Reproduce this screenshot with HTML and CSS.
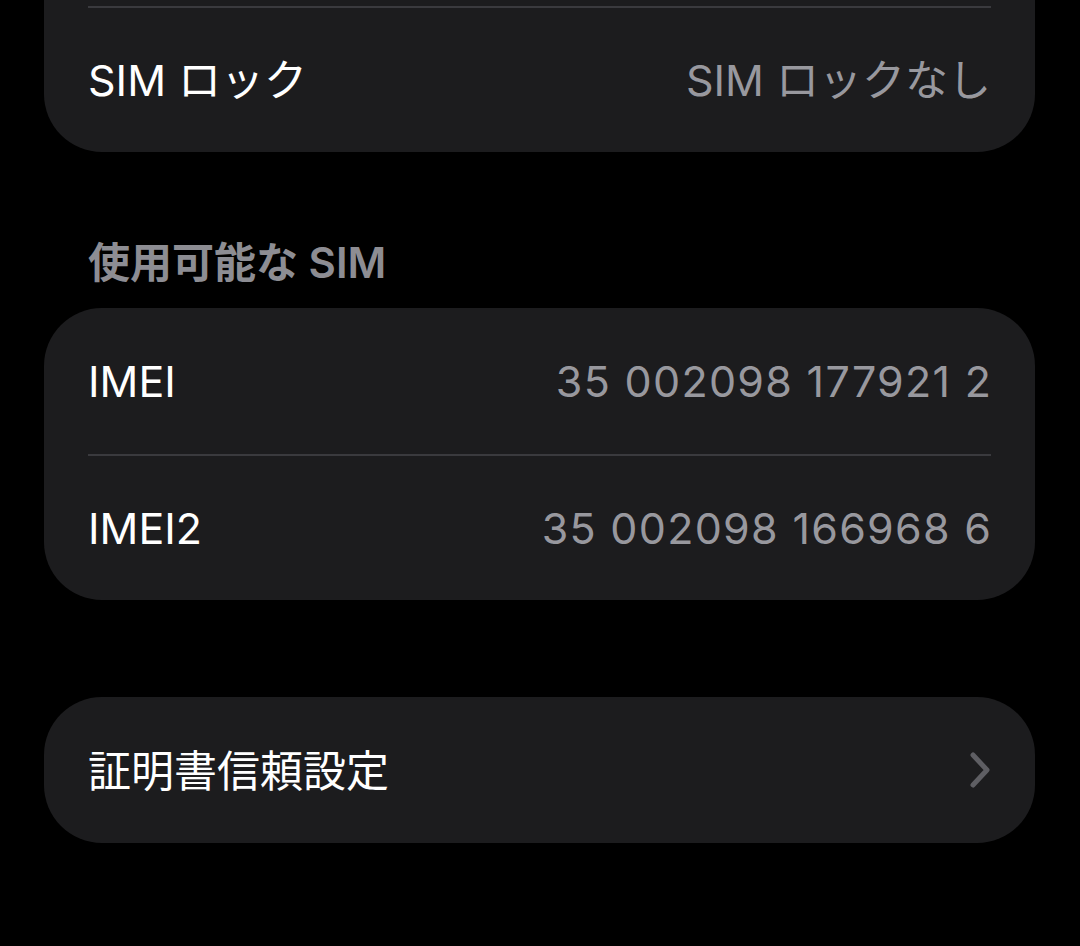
FILE: index.html
```html
<!DOCTYPE html>
<html lang="ja">
<head>
  <meta charset="utf-8">
  <title>情報</title>
  <link rel="stylesheet" href="styles.css">
</head>
<body>
  <div class="page">
    <div class="group group-top">
      <div class="row"></div>
      <div class="row">
        <span class="label">SIM ロック</span>
        <span class="value">SIM ロックなし</span>
      </div>
    </div>

    <div class="section-title">使用可能な SIM</div>
    <div class="group">
      <div class="row">
        <span class="label">IMEI</span>
        <span class="value num">35 002098 177921 2</span>
      </div>
      <div class="row">
        <span class="label">IMEI2</span>
        <span class="value num">35 002098 166968 6</span>
      </div>
    </div>

    <div class="group group-link">
      <div class="row">
        <span class="label">証明書信頼設定</span>
        <svg class="chevron" width="24" height="38" viewBox="0 0 24 38">
          <path d="M5 4 L19 19 L5 34" fill="none" stroke="#5e5e63" stroke-width="5" stroke-linecap="round" stroke-linejoin="round"/>
        </svg>
      </div>
    </div>
  </div>
</body>
</html>
```

FILE: styles.css
```css
html, body {
  margin: 0;
  padding: 0;
  background-color: #000;
}

body {
  color: #fff;
  font-family: "Inter", "Noto Sans CJK JP", sans-serif;
  -webkit-font-smoothing: antialiased;
}

.page {
  width: 991px;
  margin-left: 44px;
  height: 946px;
  overflow: hidden;
}

.group {
  background-color: #1c1c1e;
  border-radius: 58px;
  padding: 0 44px;
}

.group-top {
  margin-top: -140px;
}

.row {
  display: flex;
  align-items: center;
  justify-content: space-between;
  height: 146px;
  box-sizing: border-box;
}

.group-top .row {
  padding-bottom: 6px;
}

.row + .row {
  border-top: 2px solid #3a3a3e;
}

.label {
  font-size: 43px;
}

.value {
  font-size: 43px;
  color: #98989e;
}

.value.num {
  letter-spacing: 1.3px;
  margin-right: -1.3px;
}

.section-title {
  margin: 77px 0 0 44px;
  height: 79px;
  font-size: 42px;
  font-weight: 600;
  color: #8d8d93;
}

.group-link {
  margin-top: 97px;
}

.group-link .row {
  padding-bottom: 4px;
}

.chevron {
  margin-right: -1px;
  margin-top: 4px;
}
```
